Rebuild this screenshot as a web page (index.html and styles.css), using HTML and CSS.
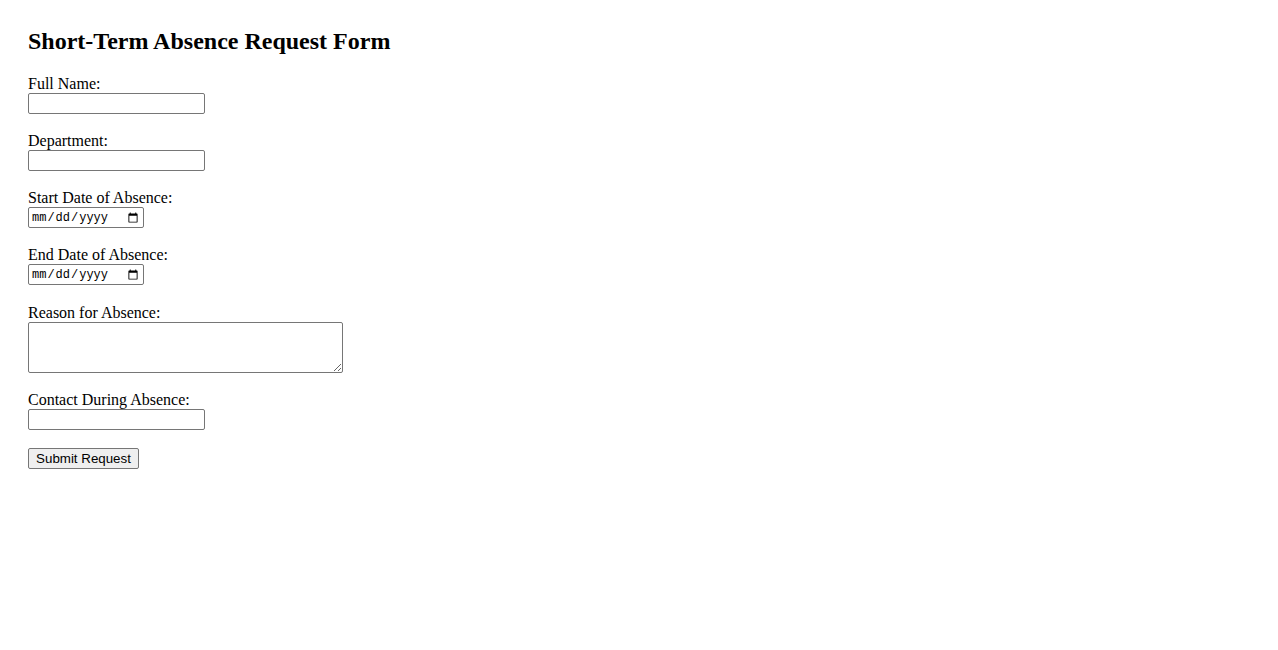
FILE: index.html
```html
<!DOCTYPE html>
<html lang="en">
<head>
<meta charset="utf-8">
<title>Short-Term Absence Request Form</title>
<link rel="stylesheet" href="styles.css">
</head>
<body>
<div class="page">
  <h2 class="title">Short-Term Absence Request Form</h2>
  <form class="form">
    <div class="field">
      <label class="label" for="name">Full Name:</label>
      <input class="text" type="text" id="name">
    </div>
    <div class="field">
      <label class="label" for="dept">Department:</label>
      <input class="text" type="text" id="dept">
    </div>
    <div class="field">
      <label class="label" for="start">Start Date of Absence:</label>
      <input class="date" type="date" id="start">
    </div>
    <div class="field">
      <label class="label" for="end">End Date of Absence:</label>
      <input class="date" type="date" id="end">
    </div>
    <div class="field field-area">
      <label class="label" for="reason">Reason for Absence:</label>
      <textarea class="area" id="reason"></textarea>
    </div>
    <div class="field">
      <label class="label" for="contact">Contact During Absence:</label>
      <input class="text" type="text" id="contact">
    </div>
    <button class="submit" type="submit">Submit Request</button>
  </form>
</div>
</body>
</html>
```
FILE: styles.css
```css
html, body {
  margin: 0;
  background: #ffffff;
}
body {
  font-family: "Liberation Serif", "Times New Roman", serif;
  font-size: 16px;
  color: #000000;
}
.page {
  padding: 27px 28px;
}
.title {
  font-size: 24px;
  font-weight: bold;
  margin: 0 0 20px 0;
  line-height: 28px;
}
.form {
  display: flex;
  flex-direction: column;
  align-items: flex-start;
}
.field {
  display: flex;
  flex-direction: column;
  align-items: flex-start;
  margin-bottom: 18px;
}
.field-area {
  margin-top: 1px;
}
.label {
  line-height: 18px;
  height: 18px;
}
.text {
  box-sizing: border-box;
  width: 177px;
  height: 21px;
  margin: 0;
  font-family: "Liberation Sans", Arial, sans-serif;
  font-size: 13.33px;
  border: 1px solid #767676;
  border-radius: 2px;
  padding: 1px 2px;
}
.date {
  box-sizing: border-box;
  width: 116px;
  height: 21px;
  margin: 0;
  font-family: "Liberation Mono", monospace;
  font-size: 12px;
  border: 1px solid #767676;
  border-radius: 2px;
  padding: 1px 2px;
}
.area {
  box-sizing: border-box;
  width: 315px;
  height: 51px;
  margin: 0;
  border: 1px solid #767676;
  border-radius: 2px;
  font-family: "Liberation Mono", monospace;
  font-size: 13.33px;
}
.submit {
  box-sizing: border-box;
  height: 21px;
  width: 111px;
  margin: 0;
  font-family: "Liberation Sans", Arial, sans-serif;
  font-size: 13.33px;
  color: #000;
  background: #efefef;
  border: 1px solid #767676;
  border-radius: 2px;
  padding: 1px 6px;
}
```
